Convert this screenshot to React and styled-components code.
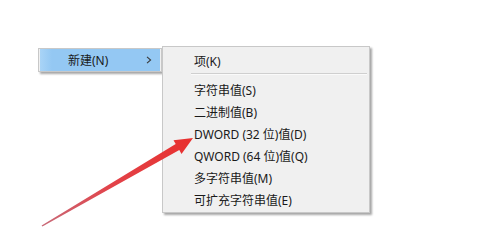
import React from 'react'
import styled, { createGlobalStyle } from 'styled-components'

const GlobalStyle = createGlobalStyle`
    html, body {
        margin: 0;
        padding: 0;
        background: #ffffff;
    }
    body {
        width: 503px;
        height: 228px;
        overflow: hidden;
        font-family: "Noto Sans", "Noto Sans CJK SC", sans-serif;
    }
`

const Stage = styled.div`
    position: relative;
    width: 503px;
    height: 228px;
    display: flex;
    align-items: flex-start;
    padding: 46px 0 0 38px;
    box-sizing: border-box;
`

const Menu = styled.div`
    box-sizing: border-box;
    width: ${p => p.width}px;
    margin-top: ${p => p.offset || 0}px;
    padding: ${p => p.pad};
    background: #f0f0f0;
    border: 1px solid #c8c8c8;
    box-shadow: 2px 2px 2px rgba(0, 0, 0, 0.35);
    display: flex;
    flex-direction: column;
`

const Item = styled.div`
    height: 22px;
    display: flex;
    align-items: center;
    justify-content: space-between;
    padding: 0 8px 0 ${p => p.indent}px;
    font-size: 12px;
    color: #1a1a1a;
    background: ${p => (p.active ? 'linear-gradient(90deg, #a9d4f7 0%, #94c8f3 10%, #94c8f3 100%)' : 'transparent')};
    white-space: nowrap;
`

const Separator = styled.div`
    height: 7px;
    display: flex;
    padding-left: 28px;
    padding-right: 2px;

    &::after {
        content: '';
        flex: 1;
        height: 1px;
        margin-top: 1px;
        background: #cfcfcf;
        box-shadow: 0 1px 0 #fafafa;
    }
`

const Chevron = () => (
    <svg width="6" height="8" viewBox="0 0 6 8">
        <path d="M1 0.8 L4.6 4 L1 7.2" fill="none" stroke="#3a3a3a" strokeWidth="1.1" />
    </svg>
)

const Pointer = styled.svg`
    position: absolute;
    left: 0;
    top: 0;
    pointer-events: none;
`

const RedArrow = () => (
    <Pointer width="503" height="228" viewBox="0 0 503 228">
        <defs>
            <linearGradient id="shaft" x1="42" y1="226" x2="193" y2="138" gradientUnits="userSpaceOnUse">
                <stop offset="0" stopColor="#c86a78" />
                <stop offset="0.45" stopColor="#e2434a" />
                <stop offset="1" stopColor="#e8302e" />
            </linearGradient>
        </defs>
        <polygon
            points="42.4,226.6 41.6,225.4 175.7,144.1 173.5,140.2 193,138 181.5,154 179.3,150.1"
            fill="url(#shaft)"
        />
    </Pointer>
)

const subItems = [
    '字符串值(S)',
    '二进制值(B)',
    'DWORD (32 位)值(D)',
    'QWORD (64 位)值(Q)',
    '多字符串值(M)',
    '可扩充字符串值(E)',
]

const App = () => {
    return (
        <>
            <GlobalStyle />
            <Stage>
                <Menu width={124} offset={2} pad="0 1px">
                    <Item active indent={28}>
                        <span>新建(N)</span>
                        <Chevron />
                    </Item>
                </Menu>
                <Menu width={208} pad="3px 0 1px">
                    <Item indent={31}>项(K)</Item>
                    <Separator />
                    {subItems.map((label, index) => (
                        <Item key={index} indent={31}>
                            {label}
                        </Item>
                    ))}
                </Menu>
                <RedArrow />
            </Stage>
        </>
    )
}

export default App
